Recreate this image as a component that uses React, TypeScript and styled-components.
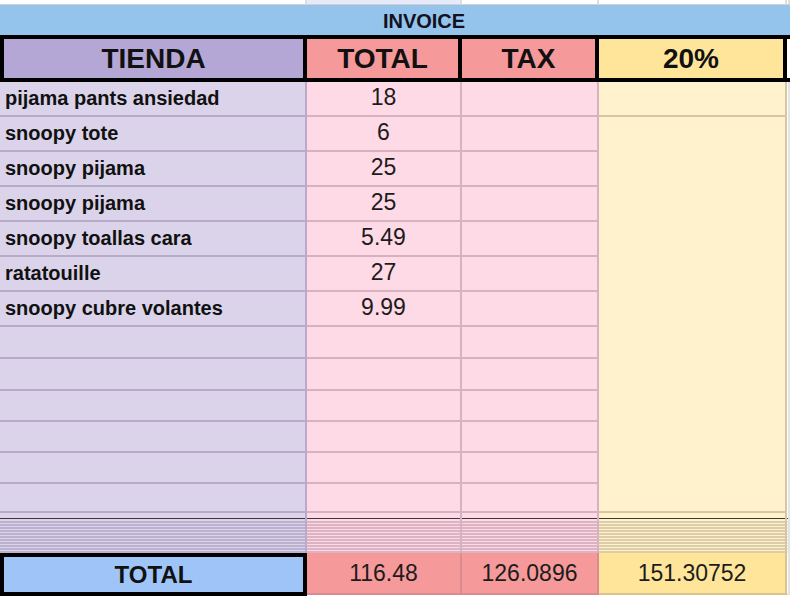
import React from "react";
import styled, { createGlobalStyle } from "styled-components";

const GlobalStyle = createGlobalStyle`
  html, body {
    margin: 0;
    padding: 0;
    background: #ffffff;
  }
  body {
    font-family: "Liberation Sans", Arial, sans-serif;
    overflow: hidden;
  }
`;

type Tone = "purple" | "pink" | "yellow" | "blank";

const COLS = "307px 155px 137px 188px 1fr";

const light: Record<Tone, string> = {
  purple: "#dad3ea",
  pink: "#fedae6",
  yellow: "#fff2cc",
  blank: "#ffffff",
};

const grid: Record<Tone, string> = {
  purple: "#b7abc9",
  pink: "#d6b1c0",
  yellow: "#d8c6a2",
  blank: "#e4e4e4",
};

const stripe: Record<Tone, string> = {
  purple: "#bcb1cf",
  pink: "#dbb3c3",
  yellow: "#ddcca8",
  blank: "#e8e8e8",
};

const strong: Record<Tone, string> = {
  purple: "#b4a7d6",
  pink: "#f6999a",
  yellow: "#ffe599",
  blank: "#ffffff",
};

const TONES: Tone[] = ["purple", "pink", "pink", "yellow", "blank"];

const items = [
  { name: "pijama pants ansiedad", total: "18" },
  { name: "snoopy tote", total: "6" },
  { name: "snoopy pijama", total: "25" },
  { name: "snoopy pijama", total: "25" },
  { name: "snoopy toallas cara", total: "5.49" },
  { name: "ratatouille", total: "27" },
  { name: "snoopy cubre volantes", total: "9.99" },
];

const emptyHeights = [32, 32, 31, 31, 31, 29];

const Sheet = styled.div`
  width: 790px;
  height: 596px;
  overflow: hidden;
  display: flex;
  flex-direction: column;
`;

const Row = styled.div<{ $h: number }>`
  display: grid;
  grid-template-columns: ${COLS};
  height: ${(p) => p.$h}px;
  flex-shrink: 0;
`;

const TopCell = styled.div<{ $active?: boolean }>`
  background: ${(p) => (p.$active ? "#e6eaf9" : "#ffffff")};
  border-right: 2px solid #dedede;
  border-bottom: 1px solid #cfcfcf;
`;

const InvoiceBar = styled.div`
  height: 30px;
  flex-shrink: 0;
  background: #94c4ec;
  display: flex;
  align-items: center;
  justify-content: center;
  padding: 2px 0 0 58px;
  box-sizing: border-box;
  font-size: 20px;
  font-weight: 700;
  color: #111122;
`;

const HeaderRow = styled(Row)`
  border-top: 4px solid #000;
  border-bottom: 4px solid #000;
  box-sizing: border-box;
`;

const HeadCell = styled.div<{ $tone: Tone; $first?: boolean }>`
  background: ${(p) => strong[p.$tone]};
  border-right: ${(p) => (p.$tone === "blank" ? "none" : "4px solid #000")};
  border-left: ${(p) => (p.$first ? "4px solid #000" : "none")};
  display: flex;
  align-items: center;
  justify-content: center;
  font-size: 28px;
  font-weight: 700;
  color: #111;
`;

const Cell = styled.div<{ $tone: Tone; $noLine?: boolean }>`
  background: ${(p) => light[p.$tone]};
  border-right: 2px solid ${(p) => grid[p.$tone]};
  border-bottom: ${(p) => (p.$noLine ? "none" : `2px solid ${grid[p.$tone]}`)};
  display: flex;
  align-items: center;
  min-width: 0;
`;

const NameCell = styled(Cell)`
  padding-left: 5px;
  font-size: 20px;
  font-weight: 700;
  color: #111;
  white-space: nowrap;
`;

const NumCell = styled(Cell)`
  justify-content: center;
  padding-bottom: 2px;
  font-size: 23px;
  color: #1c1c1c;
`;

const HiddenCell = styled.div<{ $tone: Tone }>`
  border-right: 2px solid ${(p) => grid[p.$tone]};
  background:
    linear-gradient(#3a3a3a, #3a3a3a) 0 5px / 100% 1px no-repeat,
    repeating-linear-gradient(
        to bottom,
        ${(p) => light[p.$tone]} 0,
        ${(p) => light[p.$tone]} 1.5px,
        ${(p) => stripe[p.$tone]} 1.5px,
        ${(p) => stripe[p.$tone]} 3px
      )
      0 7px / 100% 33px no-repeat,
    ${(p) => light[p.$tone]};
`;

const TotalLabel = styled.div`
  background: #9fc5f8;
  border: 4px solid #000;
  display: flex;
  align-items: center;
  justify-content: center;
  font-size: 24px;
  font-weight: 700;
  color: #111;
`;

const TotalCell = styled.div<{ $tone: Tone }>`
  background: ${(p) => strong[p.$tone]};
  border-right: 2px solid
    ${(p) => (p.$tone === "yellow" ? "#d9c48e" : p.$tone === "pink" ? "#d98c90" : "#e4e4e4")};
  border-bottom: 2px solid
    ${(p) => (p.$tone === "yellow" ? "#d9c48e" : p.$tone === "pink" ? "#d98c90" : "#e4e4e4")};
  margin-bottom: 1px;
  display: flex;
  align-items: center;
  justify-content: center;
  font-size: 23px;
  color: #1c1c1c;
`;

const App: React.FC = () => {
  return (
    <>
      <GlobalStyle />
      <Sheet>
        <Row $h={5}>
          {TONES.map((t, i) => (
            <TopCell key={i} $active={i === 1} />
          ))}
        </Row>

        <InvoiceBar>INVOICE</InvoiceBar>

        <HeaderRow $h={47}>
          <HeadCell $tone="purple" $first>
            TIENDA
          </HeadCell>
          <HeadCell $tone="pink">TOTAL</HeadCell>
          <HeadCell $tone="pink">TAX</HeadCell>
          <HeadCell $tone="yellow">20%</HeadCell>
          <HeadCell $tone="blank" />
        </HeaderRow>

        {items.map((item, i) => (
          <Row $h={35} key={i}>
            <NameCell $tone="purple">{item.name}</NameCell>
            <NumCell $tone="pink">{item.total}</NumCell>
            <Cell $tone="pink" />
            <Cell $tone="yellow" $noLine={i > 0} />
            <Cell $tone="blank" $noLine />
          </Row>
        ))}

        {emptyHeights.map((h, i) => (
          <Row $h={h} key={`e${i}`}>
            <Cell $tone="purple" />
            <Cell $tone="pink" />
            <Cell $tone="pink" />
            <Cell $tone="yellow" $noLine={i < emptyHeights.length - 1} />
            <Cell $tone="blank" $noLine />
          </Row>
        ))}

        <Row $h={40}>
          {TONES.map((t, i) => (
            <HiddenCell key={i} $tone={t} />
          ))}
        </Row>

        <Row $h={43}>
          <TotalLabel>TOTAL</TotalLabel>
          <TotalCell $tone="pink">116.48</TotalCell>
          <TotalCell $tone="pink">126.0896</TotalCell>
          <TotalCell $tone="yellow">151.30752</TotalCell>
          <TotalCell $tone="blank" />
        </Row>
      </Sheet>
    </>
  );
};

export default App;
